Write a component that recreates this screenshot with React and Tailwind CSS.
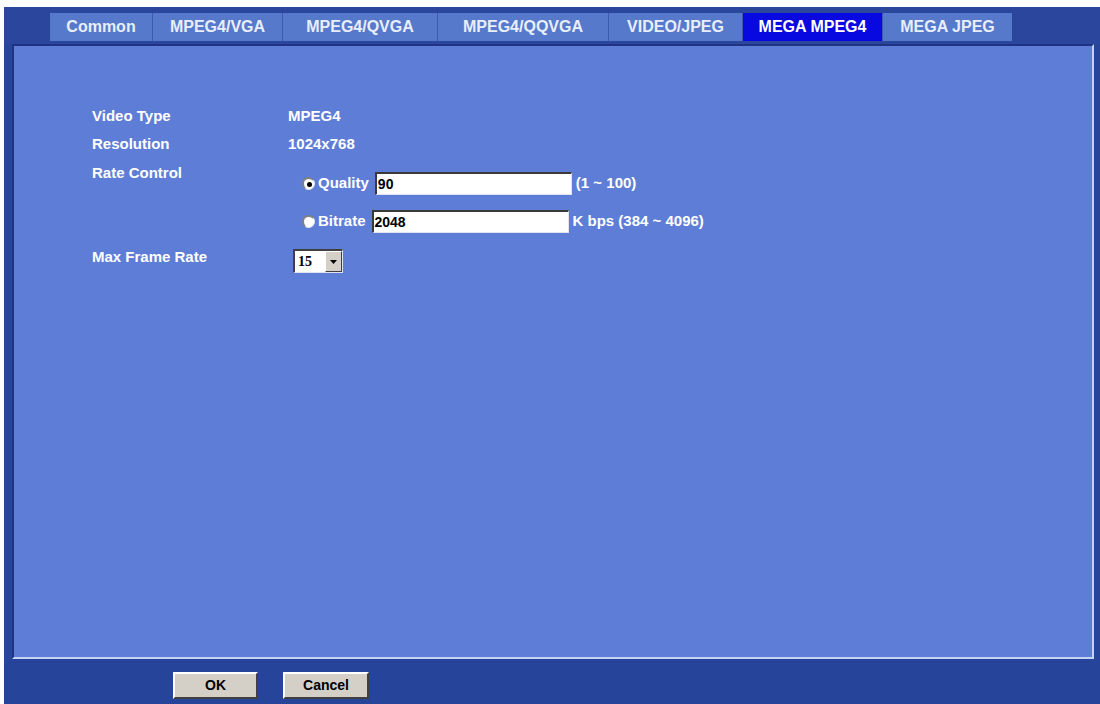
import React from "react";

const tabs = [
  { label: "Common", w: "w-[102px]" },
  { label: "MPEG4/VGA", w: "w-[129px]" },
  { label: "MPEG4/QVGA", w: "w-[154px]" },
  { label: "MPEG4/QQVGA", w: "w-[170px]" },
  { label: "VIDEO/JPEG", w: "w-[133px]" },
  { label: "MEGA MPEG4", w: "w-[139px]", active: true },
  { label: "MEGA JPEG", w: "w-[129px]" },
];

const Radio = ({ checked }) => (
  <span className="w-[13px] h-[13px] rounded-full bg-white border-t-2 border-l-2 border-[#808080] border-r border-b border-r-[#e8e8e8] border-b-[#e8e8e8] flex items-center justify-center shrink-0">
    {checked && <span className="w-[5px] h-[5px] rounded-full bg-black" />}
  </span>
);

const TextBox = ({ value }) => (
  <div className="w-[197px] h-[23px] bg-white border-t-2 border-l-2 border-[#3a3a3a] border-r border-b border-r-[#e0e4f0] border-b-[#e0e4f0] flex items-center pl-[1px] text-[14px] font-bold text-black">
    {value}
  </div>
);

const Button = ({ label, w }) => (
  <button className={`${w} h-[27px] bg-[#d4d0c8] border-t-2 border-l-2 border-white border-r-2 border-b-2 border-r-[#404040] border-b-[#404040] text-[14px] font-bold text-black`}>
    {label}
  </button>
);

export default function App() {
  return (
    <div
      className="w-[1100px] h-[704px] bg-white pt-[7px] pl-[4px] flex flex-col"
      style={{ fontFamily: '"Liberation Sans", Arial, sans-serif' }}
    >
      <div className="flex-1 bg-[#27459b] flex flex-col">
        {/* tab strip */}
        <div className="h-[37px] pl-[46px] pt-[6px] flex bg-[#2a479d]">
          <div className="flex h-[28px] gap-[1px] bg-[#3d5ab0]">
            {tabs.map((t) => (
              <div
                key={t.label}
                className={`${t.w} h-full flex items-center justify-center text-[16px] font-bold ${
                  t.active ? "bg-[#0808e0] text-white" : "bg-[#5679cc] text-[#e8eefa]"
                }`}
              >
                {t.label}
              </div>
            ))}
          </div>
        </div>

        {/* panel */}
        <div className="ml-[8px] mr-[6px] h-[615px] bg-[#5e7dd6] border-t-2 border-l-2 border-[#1f3382] border-r-2 border-b-2 border-r-[#c6d3f5] border-b-[#c6d3f5] pt-[56px] pl-[78px] text-white text-[15px] font-bold">
          <div className="flex h-[28px] items-center">
            <div className="w-[196px]">Video Type</div>
            <div>MPEG4</div>
          </div>
          <div className="flex h-[29px] items-center">
            <div className="w-[196px]">Resolution</div>
            <div>1024x768</div>
          </div>
          <div className="flex">
            <div className="w-[210px] pt-[3px]">Rate Control</div>
            <div className="flex flex-col pt-[13px]">
              <div className="flex items-center h-[23px]">
                <Radio checked />
                <span className="ml-[3px] mr-[6px]">Quality</span>
                <TextBox value="90" />
                <span className="ml-[4px]">(1 ~ 100)</span>
              </div>
              <div className="flex items-center h-[23px] mt-[15px]">
                <Radio />
                <span className="ml-[3px] mr-[6px]">Bitrate</span>
                <TextBox value="2048" />
                <span className="ml-[4px]">K bps (384 ~ 4096)</span>
              </div>
            </div>
          </div>
          <div className="flex mt-[16px]">
            <div className="w-[201px] leading-[16px]">Max Frame Rate</div>
            <div className="w-[50px] h-[24px] bg-white border-t-2 border-l-2 border-[#404040] border-r border-b border-r-[#e0e4f0] border-b-[#e0e4f0] flex">
              <div
                className="flex-1 flex items-center pl-[3px] text-[14px] font-bold text-black"
                style={{ fontFamily: '"Liberation Serif", "Times New Roman", serif' }}
              >
                15
              </div>
              <div className="w-[17px] bg-[#d4d0c8] border-t border-l border-white border-r border-b border-r-[#404040] border-b-[#404040] flex items-center justify-center">
                <svg width="7" height="4" viewBox="0 0 7 4">
                  <path d="M0 0h7L3.5 4z" fill="#000" />
                </svg>
              </div>
            </div>
          </div>
        </div>

        {/* bottom bar */}
        <div className="flex-1 flex items-start pt-[13px] pl-[169px] gap-[25px] bg-[#26449a]">
          <Button label="OK" w="w-[85px]" />
          <Button label="Cancel" w="w-[86px]" />
        </div>
      </div>
    </div>
  );
}
